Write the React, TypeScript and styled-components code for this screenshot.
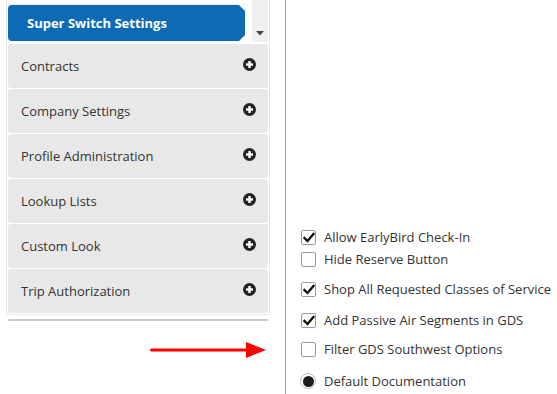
import React from "react";
import styled, { createGlobalStyle } from "styled-components";

const GlobalStyle = createGlobalStyle`
  html, body { margin: 0; padding: 0; background: #fff; }
  body { font-family: "Open Sans", "Liberation Sans", sans-serif; color: #333; }
  * { box-sizing: border-box; }
`;

const Page = styled.div`
  display: flex;
  width: 557px;
  height: 394px;
  overflow: hidden;
`;

const Sidebar = styled.div`
  width: 270px;
  padding-left: 6px;
  flex: none;
  display: flex;
  flex-direction: column;
`;

const Panel = styled.div`
  border: 1px solid #e8e8e8;
  border-top: none;
  padding: 0 1px 1px 1px;
`;

const TabBar = styled.div`
  display: flex;
  height: 42px;
  margin-bottom: 2px;
`;

const TabWell = styled.div`
  flex: 1;
  padding-top: 5px;
  padding-right: 7px;
  position: relative;
  &::before {
    content: "";
    position: absolute;
    left: 0;
    right: 2px;
    top: 0;
    height: 4px;
    border-bottom: 1px solid #efefef;
  }
`;

const Tab = styled.div`
  height: 36px;
  background: #0d6bb5;
  color: #fff;
  font-weight: 700;
  font-size: 13px;
  line-height: 36px;
  padding-left: 19px;
  border-radius: 4px 0 0 4px;
  clip-path: polygon(0 0, calc(100% - 6px) 0, 100% 6px, 100% calc(100% - 6px), calc(100% - 6px) 100%, 0 100%);
`;

const ScrollStub = styled.div`
  width: 16px;
  background: #f0f0f0;
  display: flex;
  align-items: flex-end;
  justify-content: center;
  padding-bottom: 6px;
`;

const MenuList = styled.div`
  display: flex;
  flex-direction: column;
  gap: 1px;
`;

const MenuItem = styled.div`
  height: 44px;
  background: #e8e8e8;
  border-radius: 3px;
  display: flex;
  align-items: center;
  justify-content: space-between;
  padding: 0 12px 0 13px;
  font-size: 13px;
  color: #333;
`;

const PlusIcon = styled.svg`
  width: 13px;
  height: 13px;
  margin-bottom: 4px;
`;

const BottomRule = styled.div`
  height: 2px;
  background: #cacaca;
  margin: 4px 2px 0 2px;
`;

const ArrowWrap = styled.div`
  margin-top: 20px;
  padding-left: 144px;
  height: 18px;
`;

const Divider = styled.div`
  width: 1px;
  background: #a3a3a3;
  margin-left: 15px;
  flex: none;
`;

const Options = styled.div`
  padding-left: 15px;
  padding-top: 228px;
  display: flex;
  flex-direction: column;
`;

const OptionRow = styled.label<{ $top: number }>`
  display: flex;
  align-items: center;
  gap: 8px;
  height: 18px;
  margin-top: ${(p) => p.$top}px;
  font-size: 13px;
  color: #333;
  white-space: nowrap;
`;

const Box = styled.span`
  width: 15px;
  height: 15px;
  border: 1px solid #a294ad;
  border-radius: 2px;
  background: #fff;
  display: flex;
  align-items: center;
  justify-content: center;
  flex: none;
`;

const Radio = styled.span`
  width: 16px;
  height: 16px;
  border-radius: 50%;
  border: 1px solid #bdbdbd;
  background: #fff;
  display: flex;
  align-items: center;
  justify-content: center;
  flex: none;
  margin-left: -1px;
  &::after {
    content: "";
    width: 11px;
    height: 11px;
    border-radius: 50%;
    background: #1c1c1c;
  }
`;

const Check = () => (
  <svg width="12" height="11" viewBox="0 0 12 11">
    <path d="M1.5 6 L4.5 9 L10.5 2" fill="none" stroke="#111" strokeWidth="2.4" strokeLinecap="square" />
  </svg>
);

const Plus = () => (
  <PlusIcon viewBox="0 0 13 13">
    <circle cx="6.5" cy="6.5" r="6.5" fill="#222" />
    <rect x="3" y="5.3" width="7" height="2.4" fill="#fff" />
    <rect x="5.3" y="3" width="2.4" height="7" fill="#fff" />
  </PlusIcon>
);

const menu = [
  "Contracts",
  "Company Settings",
  "Profile Administration",
  "Lookup Lists",
  "Custom Look",
  "Trip Authorization",
];

const options: { label: string; checked: boolean; top: number }[] = [
  { label: "Allow EarlyBird Check-In", checked: true, top: 0 },
  { label: "Hide Reserve Button", checked: false, top: 4 },
  { label: "Shop All Requested Classes of Service", checked: true, top: 12 },
  { label: "Add Passive Air Segments in GDS", checked: true, top: 13 },
  { label: "Filter GDS Southwest Options", checked: false, top: 11 },
];

export default function App() {
  return (
    <>
      <GlobalStyle />
      <Page>
        <Sidebar>
          <Panel>
            <TabBar>
              <TabWell>
                <Tab>Super Switch Settings</Tab>
              </TabWell>
              <ScrollStub>
                <svg width="8" height="5" viewBox="0 0 8 5">
                  <path d="M0 0 H8 L4 4.5 Z" fill="#444" />
                </svg>
              </ScrollStub>
            </TabBar>
            <MenuList>
              {menu.map((m) => (
                <MenuItem key={m}>
                  <span>{m}</span>
                  <Plus />
                </MenuItem>
              ))}
            </MenuList>
          </Panel>
          <BottomRule />
          <ArrowWrap>
            <svg width="118" height="18" viewBox="0 0 118 18">
              <line x1="1.5" y1="9" x2="100" y2="9" stroke="#f00" strokeWidth="3" strokeLinecap="round" />
              <polygon points="96,1 116,9 96,17" fill="#f00" />
            </svg>
          </ArrowWrap>
        </Sidebar>
        <Divider />
        <Options>
          {options.map((o) => (
            <OptionRow key={o.label} $top={o.top}>
              <Box>{o.checked && <Check />}</Box>
              <span>{o.label}</span>
            </OptionRow>
          ))}
          <OptionRow $top={14}>
            <Radio />
            <span>Default Documentation</span>
          </OptionRow>
        </Options>
      </Page>
    </>
  );
}
